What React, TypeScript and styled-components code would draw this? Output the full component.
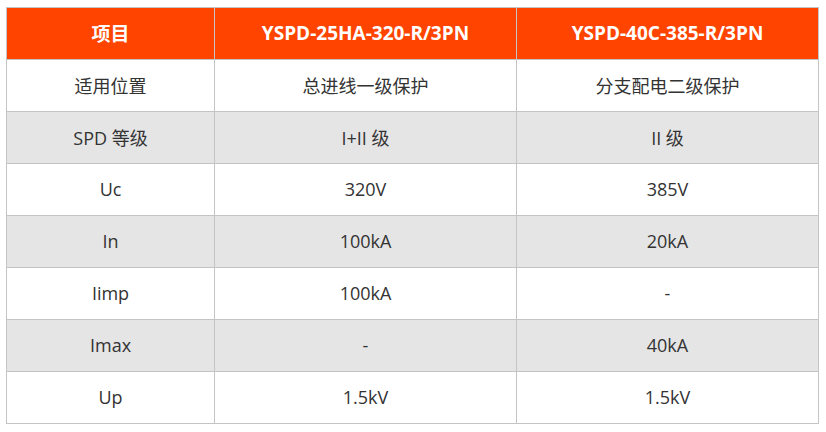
import * as React from 'react';
import styled, { createGlobalStyle } from 'styled-components';

const GlobalStyle = createGlobalStyle`
  body {
    margin: 0;
    background: #ffffff;
    font-family: "Open Sans", "Noto Sans CJK SC", sans-serif;
  }
`;

const WRAPPER = styled.div`
  padding: 7px 0 0 6px;
`;

const TABLE = styled.table`
  width: 812px;
  table-layout: fixed;
  border-collapse: collapse;
  border: 1px solid #c4c4c4;
`;

const HEADCELL = styled.th`
  height: 49px;
  padding: 0 0 2px;
  background-color: #ff4400;
  color: #ffffff;
  font-size: 19px;
  font-weight: bold;
  text-align: center;
  border: 1px solid #c4c4c4;
`;

const CELL = styled.td<{ $shaded: boolean }>`
  height: 49px;
  padding: 0 0 2px;
  background-color: ${(p) => (p.$shaded ? '#e5e5e5' : '#ffffff')};
  color: #333333;
  font-size: 18px;
  text-align: center;
  border: 1px solid #c4c4c4;
`;

const rows = [
  ['适用位置', '总进线一级保护', '分支配电二级保护'],
  ['SPD 等级', 'I+II 级', 'II 级'],
  ['Uc', '320V', '385V'],
  ['In', '100kA', '20kA'],
  ['Iimp', '100kA', '-'],
  ['Imax', '-', '40kA'],
  ['Up', '1.5kV', '1.5kV'],
];

const App: React.FunctionComponent = () => {
  return (
    <WRAPPER>
      <GlobalStyle />
      <TABLE>
        <colgroup>
          <col style={{ width: 208 }} />
          <col style={{ width: 302 }} />
          <col style={{ width: 302 }} />
        </colgroup>
        <thead>
          <tr>
            <HEADCELL>项目</HEADCELL>
            <HEADCELL>YSPD-25HA-320-R/3PN</HEADCELL>
            <HEADCELL>YSPD-40C-385-R/3PN</HEADCELL>
          </tr>
        </thead>
        <tbody>
          {rows.map((row, i) => (
            <tr key={row[0]}>
              {row.map((text, j) => (
                <CELL key={j} $shaded={i % 2 === 1}>
                  {text}
                </CELL>
              ))}
            </tr>
          ))}
        </tbody>
      </TABLE>
    </WRAPPER>
  );
};

export default App;
